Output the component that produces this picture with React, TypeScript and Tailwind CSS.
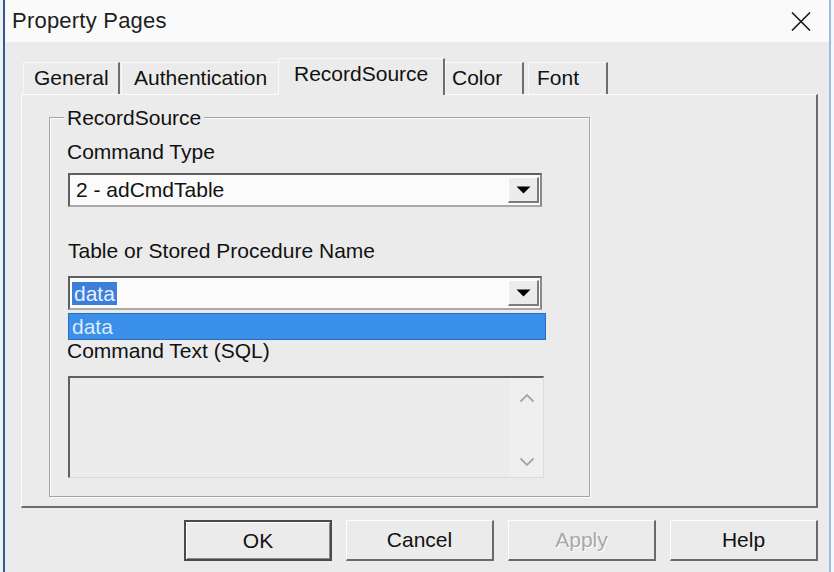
import React from "react"

const font = "font-['Liberation_Sans',Arial,sans-serif]"

const tabs = [
  { title: "General", w: "w-[97px]", pl: "pl-[10px]", sep: true },
  { title: "Authentication", w: "w-[157px]", pl: "pl-[12px]", sep: false },
  { title: "RecordSource", w: "w-[167px]", pl: "pl-[15px]", active: true, sep: true },
  { title: "Color", w: "w-[79px]", pl: "pl-[6px]", sep: true },
  { title: "Font", w: "w-[80px]", pl: "pl-[8px]", sep: true },
]

function DropButton() {
  return (
    <div className="w-[31px] h-[26px] my-[2px] mr-[1px] flex items-center justify-center bg-[#ececec] border-t border-l border-t-white border-l-white border-r-2 border-b-2 border-r-[#7c7c7c] border-b-[#7c7c7c]">
      <svg width="15" height="8" viewBox="0 0 15 8">
        <path d="M0.5 0.5 H14.5 L7.5 7.5 Z" fill="#000" />
      </svg>
    </div>
  )
}

function Combo({ children }: { children: React.ReactNode }) {
  return (
    <div className="ml-[1px] w-[474px] h-[34px] flex bg-[#fbfbfb] border-t-2 border-l-2 border-t-[#5e5e5e] border-l-[#5e5e5e] border-r-2 border-b-2 border-r-[#8a8a8a] border-b-[#a9a9a9]">
      <div className="flex-1 flex items-center">{children}</div>
      <DropButton />
    </div>
  )
}

function Btn({ label, def, disabled }: { label: string; def?: boolean; disabled?: boolean }) {
  return (
    <div
      className={
        "w-[148px] h-[41px] flex items-center justify-center bg-[#ebebeb] text-[21px] " +
        (def
          ? "border-2 border-[#4a4a4a] shadow-[inset_1px_1px_0_#fff,inset_-1px_-1px_0_#8a8a8a]"
          : "border-t border-l border-t-[#fdfdfd] border-l-[#fdfdfd] border-r-2 border-b-2 border-r-[#6a6a6a] border-b-[#6a6a6a]") +
        (disabled ? " text-[#a8a8a8] [text-shadow:1px_1px_0_#fff]" : " text-[#111]")
      }
    >
      {label}
    </div>
  )
}

export default function App() {
  return (
    <div className={"w-[834px] h-[572px] flex overflow-hidden bg-white " + font}>
      {/* window frame left */}
      <div className="w-[3px] bg-[#eef2f7]" />
      <div className="w-[2px] bg-[#34598a]" />

      <div className="flex-1 flex flex-col">
        {/* title bar */}
        <div className="h-[42px] flex items-center justify-between bg-[#fafafa] pl-[7px] pr-[18px]">
          <span className="text-[22px] text-[#1e1e1e] leading-[38px] tracking-[0.01em]">Property Pages</span>
          <svg width="20" height="19" viewBox="0 0 20 19">
            <path d="M1 0.5 L19 18.5 M19 0.5 L1 18.5" stroke="#1a1a1a" strokeWidth="1.6" />
          </svg>
        </div>

        {/* body */}
        <div className="flex-1 flex flex-col bg-[#ebebeb] pl-[16px] pr-[11px] pt-[16px] text-[21px] text-[#111] leading-[24px]">
          {/* tabs */}
          <div className="h-[36px] flex items-end pl-[2px]">
            {tabs.map((t, i) => (
              <div
                key={t.title}
                className={
                  t.w +
                  " " +
                  t.pl +
                  " flex bg-[#ebebeb] border-t border-t-[#fafafa] " +
                  (i === 4 ? "ml-[4px] " : "") +
                  (t.active
                    ? "h-[37px] -mb-[1px] relative z-10 pt-[3px] border-l border-l-[#fafafa]"
                    : "h-[32px] pt-[3px] bg-[#e8e8e8] " + (i === 1 ? "border-l border-l-[#fafafa] ml-[1px]" : "border-l border-l-[#f6f6f6]")) +
                  (t.sep ? " border-r-2 border-r-[#6e6e6e]" : "")
                }
              >
                {t.title}
              </div>
            ))}
          </div>

          {/* panel */}
          <div className="w-[797px] h-[414px] border-t border-l border-t-[#fbfbfb] border-l-[#fbfbfb] border-r-2 border-b-2 border-r-[#6b6b6b] border-b-[#6b6b6b] pl-[27px] pt-[22px]">
            <div className="relative w-[541px] h-[380px] border border-[#a3a3a3] shadow-[inset_1px_1px_0_#fdfdfd,1px_1px_0_#fdfdfd]">
              <span className="absolute -top-[12px] left-[14px] px-[3px] bg-[#ebebeb]">RecordSource</span>

              <div className="flex flex-col pl-[17px] pt-[22px]">
                <div>Command Type</div>
                <div className="mt-[9px]">
                  <Combo>
                    <span className="pl-[6px]">2 - adCmdTable</span>
                  </Combo>
                </div>

                <div className="mt-[32px] pl-[1px]">Table or Stored Procedure Name</div>
                <div className="mt-[13px] relative">
                  <Combo>
                    <span className="ml-[2px] px-[2px] h-[23px] leading-[23px] bg-[#3d7fd8] text-[#e6f0ff]">data</span>
                  </Combo>
                  {/* open dropdown list */}
                  <div className="absolute left-[1px] top-[37px] w-[478px] h-[27px] bg-[#3a8fe8] border border-[#2c6cbf] pl-[3px] leading-[25px] text-[#dcebff] z-10">
                    data
                  </div>
                </div>

                <div className="mt-[29px]">Command Text (SQL)</div>
                <div className="mt-[13px] ml-[1px] w-[476px] h-[102px] flex bg-[#ececec] border-t-2 border-l-2 border-t-[#606060] border-l-[#606060] border-r border-b border-r-[#dcdcdc] border-b-[#dcdcdc]">
                  <div className="flex-1" />
                  <div className="w-[33px] flex flex-col items-center justify-between pt-[15px] pb-[10px] bg-[#efefef]">
                    <svg width="16" height="10" viewBox="0 0 16 10">
                      <path d="M1.5 8.5 L8 2 L14.5 8.5" fill="none" stroke="#a6a6a6" strokeWidth="1.8" />
                    </svg>
                    <svg width="16" height="10" viewBox="0 0 16 10">
                      <path d="M1.5 1.5 L8 8 L14.5 1.5" fill="none" stroke="#a6a6a6" strokeWidth="1.8" />
                    </svg>
                  </div>
                </div>
              </div>
            </div>
          </div>

          {/* buttons */}
          <div className="mt-[12px] flex justify-end gap-[14px]">
            <Btn label="OK" def />
            <Btn label="Cancel" />
            <Btn label="Apply" disabled />
            <Btn label="Help" />
          </div>
        </div>
      </div>

      {/* window frame right */}
      <div className="w-[2px] bg-[#9dbde0]" />
      <div className="w-[3px] bg-[#f4f7fb]" />
    </div>
  )
}
